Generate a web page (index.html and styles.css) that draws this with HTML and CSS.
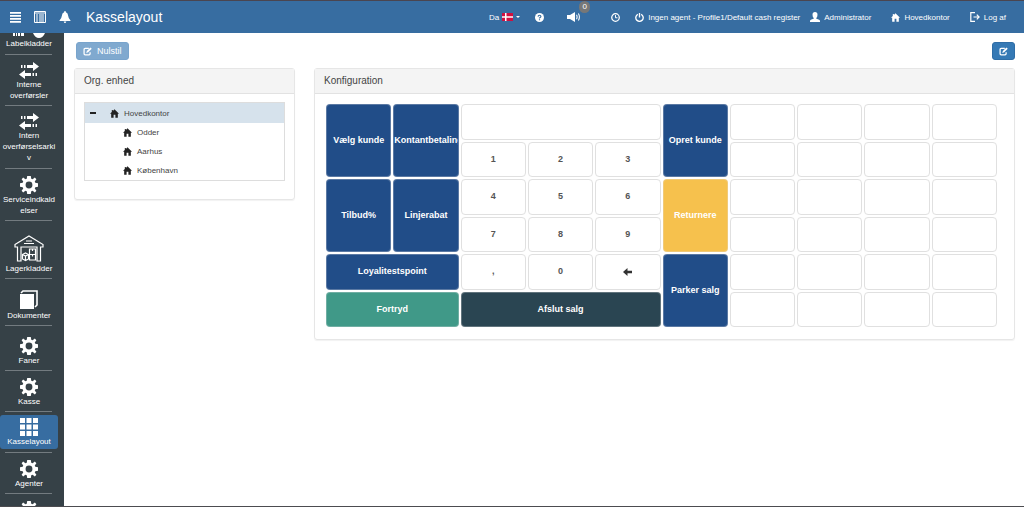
FILE: index.html
```html
<!DOCTYPE html>
<html lang="da">
<head>
<meta charset="utf-8">
<meta name="viewport" content="width=device-width, initial-scale=1">
<title>Kasselayout</title>
<link rel="stylesheet" href="styles.css">
</head>
<body>
<svg class="defs" aria-hidden="true">
  <symbol id="gear" viewBox="0 0 20 20"><path fill-rule="evenodd" d="M8 0h4l.5 3 1.500.6L16.500 1.800l1.700 1.700L16.400 6l.6 1.500 3 .5v4l-3 .5-.6 1.500 1.800 2.500-1.700 1.700L14 16.400l-1.500.6-.5 3H8l-.5-3-1.500-.6-2.500 1.800-1.700-1.700L3.600 14 3 12.500 0 12V8l3-.5L3.600 6 1.800 3.500l1.700-1.700L6 3.600 7.500 3zM10 6.200a3.800 3.800 0 1 0 0 7.600 3.800 3.800 0 0 0 0-7.600z"/></symbol>
  <symbol id="arrows" viewBox="0 0 20 17"><path d="M2 3h1.500v3H2zM5 3h1.500v3H5zM8 3h6V0l6 4.500L14 9V6H8zM18 11h-1.500v3H18zM15 11h-1.500v3H15zM12 11H6V8l-6 4.500L6 17v-3h6z"/></symbol>
  <symbol id="home" viewBox="0 0 10 10"><path d="M5 .3 10 5.400H8.700V9.700H6V6.500H4v3.200H1.300V5.400H0L2 3.300V1h1.200v1.100z"/></symbol>
  <symbol id="edit" viewBox="0 0 10 10"><path d="M6.500 1.600H2.400Q1.200 1.600 1.200 2.800v4.700Q1.200 8.700 2.400 8.700h4.300Q7.900 8.700 7.900 7.500V5.700" fill="none" stroke="currentColor" stroke-width="1.400"/><path d="M8.200.5 9.700 2 5.800 5.900l-2.200.7.700-2.200z"/></symbol>
</svg>

<header class="topbar">
  <button class="icon-btn" type="button" aria-label="Menu"><svg class="i12" viewBox="0 0 12 12"><path d="M1 1h11v1.800H1zM1 4h11v1.800H1zM1 7h11v1.800H1zM1 10h11v1.800H1z"/></svg></button>
  <button class="icon-btn" type="button" aria-label="Liste"><svg class="i12" viewBox="0 0 12 12"><path fill="none" stroke="currentColor" d="M.5.500h11v11H.5zM.5 2h11"/><path d="M2 3.500h2v1H2zM5 3.500h5v1H5zM2 5.500h2v1H2zM5 5.500h5v1H5zM2 7.500h2v1H2zM5 7.500h5v1H5zM2 9.500h2v1H2zM5 9.500h5v1H5z"/></svg></button>
  <button class="icon-btn" type="button" aria-label="Beskeder"><svg class="i12" viewBox="0 0 12 12"><path d="M6 0q.9 0 .9 1.200Q9 2 9.200 5q.2 2.500 2.300 4.500v.5H.5v-.5Q2.600 7.500 2.800 5 3 2 5.100 1.200 5.100 0 6 0zM4.700 10.500h2.600Q7 12 6 12t-1.300-1.500z"/></svg></button>
  <h1 class="title">Kasselayout</h1>
  <nav class="topnav" aria-label="Topmenu">
    <button class="top-item" type="button">Da
      <svg class="flag" viewBox="0 0 11 8"><path fill="#d01040" d="M0 0h11v8H0z"/><path fill="#fff" d="M3 0h1.500v8H3zM0 3.300h11v1.400H0z"/></svg>
      <svg class="caret" viewBox="0 0 4 2"><path d="M0 0h4L2 2z"/></svg></button>
    <a class="top-item gap-s" href="#" aria-label="Hjælp"><svg class="i9" viewBox="0 0 10 10"><circle cx="5" cy="5" r="5"/><path d="M3.400 4Q3.500 2.500 5 2.500T6.600 3.900Q6.500 4.700 5 5.500v.7M5 6.900v1.200" fill="none" stroke="#376da1" stroke-width="1.300"/></svg></a>
    <a class="top-item gap-l sound" href="#" aria-label="Lyd"><svg class="speaker" viewBox="0 0 13 10"><path d="M0 3h3l5-3v10L3 7H0z"/><path d="M9.500 2.800q1.200 2.200 0 4.400M11.400 1.500q2 3.500 0 7" fill="none" stroke="currentColor" stroke-width="1.100"/></svg><span class="badge">0</span></a>
    <a class="top-item gap-xl" href="#" aria-label="Ur"><svg class="i9" viewBox="0 0 10 10"><circle cx="5" cy="5" r="4.200" fill="none" stroke="currentColor" stroke-width="1.400"/><path d="M5 2.300v3h2.200" fill="none" stroke="currentColor" stroke-width="1.100"/></svg></a>
    <a class="top-item gap-s" href="#"><svg class="i9" viewBox="0 0 10 10"><path d="M3.200 1.500A4.100 4.100 0 1 0 6.800 1.500M5 0v5" fill="none" stroke="currentColor" stroke-width="1.500"/></svg>Ingen agent - Profile1/Default cash register</a>
    <a class="top-item gap-xs" href="#"><svg class="i10" viewBox="0 0 10 10"><path d="M5 0q2.500 0 2.500 2.800Q7.500 5 6.300 6v.8Q10 7.700 10 9v1H0V9q0-1.300 3.700-2.200V6Q2.500 5 2.500 2.800 2.500 0 5 0z"/></svg>Administrator</a>
    <a class="top-item gap-m" href="#"><svg class="i9"><use href="#home"/></svg>Hovedkontor</a>
    <a class="top-item gap-m" href="#"><svg class="i10" viewBox="0 0 10 10"><path d="M5 .7H.8v8.600H5M3.500 5H9M6.800 2.700 9.100 5 6.800 7.300" fill="none" stroke="currentColor" stroke-width="1.200"/></svg>Log af</a>
  </nav>
</header>

<div class="shell">
  <nav class="sidebar" aria-label="Sidemenu">
    <ul class="side-list">
      <li class="side-row first"><a class="side-link" href="#"><svg class="stub" viewBox="0 0 32 5"><path d="M0 0h2v3H0zM3 0h1v3H3zM5 0h2v3H5zM8 0h3v3H8zM20 0h12q-2 5-6 5t-6-5z"/></svg>Labelkladder</a></li>
      <li class="side-row"><a class="side-link" href="#"><svg class="s17"><use href="#arrows"/></svg>Interne overførsler</a></li>
      <li class="side-row"><a class="side-link long" href="#"><svg class="s17"><use href="#arrows"/></svg>Intern overførselsarkiv</a></li>
      <li class="side-row"><a class="side-link" href="#"><svg class="s18"><use href="#gear"/></svg>Serviceindkaldelser</a></li>
      <li class="side-row tall"><a class="side-link" href="#"><svg class="s28" viewBox="0 0 30 28"><g fill="none" stroke="currentColor" stroke-width="1.200"><path d="M1 9.500 15 1l14 8.500v2.500h-2.500v14H23V12H7v14H3.500V12H1zM7 12h16M10 8.500h10M12 6h6"/><path d="M15.500 14h6v5.500h-6zM15.500 19.500h6V25h-6zM8.500 19.500l3-1.500 3 1.500V24l-3 1.500-3-1.500zM8.500 19.500l3 1.500 3-1.500M11.500 21v4M18.500 14v2M18.500 19.500v2"/></g></svg>Lagerkladder</a></li>
      <li class="side-row roomy"><a class="side-link" href="#"><svg class="s20" viewBox="0 0 20 20"><path d="M1 4h14v15H1z"/><path d="M2 3 4 1h14v14l-2 2" fill="none" stroke="currentColor" stroke-width="1.600"/></svg>Dokumenter</a></li>
      <li class="side-row roomy"><a class="side-link" href="#"><svg class="s18"><use href="#gear"/></svg>Faner</a></li>
      <li class="side-row"><a class="side-link" href="#"><svg class="s18"><use href="#gear"/></svg>Kasse</a></li>
      <li class="side-row current"><a class="side-link" href="#" aria-current="page"><svg class="s18" viewBox="0 0 18 18"><path d="M0 0h5v5H0zM6.500 0h5v5h-5zM13 0h5v5h-5zM0 6.500h5v5H0zM6.500 6.500h5v5h-5zM13 6.500h5v5h-5zM0 13h5v5H0zM6.500 13h5v5h-5zM13 13h5v5h-5z"/></svg>Kasselayout</a></li>
      <li class="side-row"><a class="side-link" href="#"><svg class="s18"><use href="#gear"/></svg>Agenter</a></li>
      <li class="side-row"><a class="side-link" href="#" aria-label="Indstillinger"><svg class="s18"><use href="#gear"/></svg></a></li>
    </ul>
  </nav>

  <main class="main">
    <div class="toolbar">
      <button class="btn muted" type="button"><svg class="i9"><use href="#edit"/></svg>Nulstil</button>
      <button class="btn" type="button" aria-label="Rediger"><svg class="i9"><use href="#edit"/></svg></button>
    </div>
    <div class="columns">
      <section class="panel">
        <h2 class="panel-head">Org. enhed</h2>
        <div class="org-body">
          <ul class="tree">
            <li class="node selected"><svg class="minus" viewBox="0 0 6 2"><path d="M0 0h6v2H0z"/></svg><svg class="i9"><use href="#home"/></svg>Hovedkontor</li>
            <li class="node child"><svg class="i9"><use href="#home"/></svg>Odder</li>
            <li class="node child"><svg class="i9"><use href="#home"/></svg>Aarhus</li>
            <li class="node child"><svg class="i9"><use href="#home"/></svg>København</li>
          </ul>
        </div>
      </section>
      <section class="panel">
        <h2 class="panel-head">Konfiguration</h2>
        <div class="keys">
          <button class="key blue r2" type="button">Vælg kunde</button>
          <button class="key blue r2" type="button">Kontantbetaling</button>
          <button class="key c3" type="button" aria-label="Display"></button>
          <button class="key blue r2" type="button">Opret kunde</button>
          <button class="key" type="button"></button><button class="key" type="button"></button><button class="key" type="button"></button><button class="key" type="button"></button>
          <button class="key" type="button">1</button><button class="key" type="button">2</button><button class="key" type="button">3</button>
          <button class="key" type="button"></button><button class="key" type="button"></button><button class="key" type="button"></button><button class="key" type="button"></button>
          <button class="key blue r2" type="button">Tilbud%</button>
          <button class="key blue r2" type="button">Linjerabat</button>
          <button class="key" type="button">4</button><button class="key" type="button">5</button><button class="key" type="button">6</button>
          <button class="key yellow r2" type="button">Returnere</button>
          <button class="key" type="button"></button><button class="key" type="button"></button><button class="key" type="button"></button><button class="key" type="button"></button>
          <button class="key" type="button">7</button><button class="key" type="button">8</button><button class="key" type="button">9</button>
          <button class="key" type="button"></button><button class="key" type="button"></button><button class="key" type="button"></button><button class="key" type="button"></button>
          <button class="key blue c2" type="button">Loyalitestspoint</button>
          <button class="key" type="button">,</button><button class="key" type="button">0</button>
          <button class="key" type="button" aria-label="Slet"><svg class="back" viewBox="0 0 9 8"><path d="M4.500 0v2.700H9v2.600H4.500V8L0 4z"/></svg></button>
          <button class="key blue r2" type="button">Parker salg</button>
          <button class="key" type="button"></button><button class="key" type="button"></button><button class="key" type="button"></button><button class="key" type="button"></button>
          <button class="key green c2" type="button">Fortryd</button>
          <button class="key slate c3" type="button">Afslut salg</button>
          <button class="key" type="button"></button><button class="key" type="button"></button><button class="key" type="button"></button><button class="key" type="button"></button>
        </div>
      </section>
    </div>
  </main>
</div>
</body>
</html>
```
FILE: styles.css
```css
* { box-sizing: border-box; }
body {
  margin: 0;
  height: 100vh;
  display: flex;
  flex-direction: column;
  overflow: hidden;
  border-top: 1px solid #4a4550;
  border-bottom: 1px solid #4c4c50;
  background: #fff;
  color: #444;
  font: 8px/11px "Liberation Sans", Arial, sans-serif;
}
svg { display: block; flex: none; fill: currentColor; }
button { font: inherit; color: inherit; cursor: pointer; }
a { color: inherit; text-decoration: none; }
ul { list-style: none; margin: 0; padding: 0; }
.defs { position: absolute; width: 0; height: 0; }

.i9 { width: 9px; height: 9px; }
.i10 { width: 10px; height: 10px; }
.i12 { width: 12px; height: 12px; }

.topbar {
  flex: none;
  display: flex;
  align-items: center;
  height: 32px;
  padding: 0 18px 0 9px;
  background: #376da1;
  color: #fff;
}
.icon-btn { margin-right: 13px; padding: 0; border: 0; background: none; }
.title { margin: 0 0 0 2px; font-size: 14px; line-height: 20px; font-weight: 400; }
.topnav { display: flex; align-items: center; margin-left: auto; }
.top-item {
  display: flex;
  align-items: center;
  gap: 4px;
  padding: 0;
  border: 0;
  background: none;
  white-space: nowrap;
}
button.top-item { gap: 3px; }
.gap-xs { margin-left: 10px; }
.gap-s { margin-left: 15px; }
.gap-m { margin-left: 20px; }
.gap-l { margin-left: 23px; }
.gap-xl { margin-left: 31px; }
.flag { width: 11px; height: 8px; }
.caret { width: 4px; height: 2px; }
.speaker { width: 13px; height: 10px; }
.sound { position: relative; }
.badge {
  position: absolute;
  left: 12px;
  top: -11px;
  width: 11px;
  height: 12px;
  border-radius: 6px;
  background: #777;
  line-height: 12px;
  text-align: center;
}

.shell { flex: 1; min-height: 0; display: flex; }
.sidebar { flex: none; width: 64px; overflow: hidden; background: #364147; color: #fff; }
.side-row { width: 58px; padding: 7px 0 0; }
.side-row::after {
  content: "";
  display: block;
  height: 1px;
  margin: 4px 6px 0 5px;
  background: #737b80;
}
.side-row.first { padding-top: 0; }
.side-row.first::after { margin-top: 5px; }
.side-row.tall { padding-top: 14px; }
.side-row.roomy { padding-top: 11px; }
.side-row.current { padding-top: 3px; }
.side-row.current::after { margin-top: 3px; }
.side-link {
  display: flex;
  flex-direction: column;
  align-items: center;
  padding: 0 2px;
  text-align: center;
  overflow-wrap: anywhere;
}
.side-link.long { padding-bottom: 1px; }
.current .side-link { padding: 3px 2px 2px; border-radius: 3px; background: #376da1; }
.stub { width: 32px; height: 5px; }
.s17 { width: 20px; height: 17px; }
.s18 { width: 18px; height: 18px; }
.s20 { width: 20px; height: 20px; }
.s28 { width: 30px; height: 28px; }

.main { flex: 1; min-width: 0; padding: 9px 9px 0 10px; }
.toolbar { display: flex; justify-content: space-between; padding-left: 2px; margin-bottom: 8px; }
.btn {
  display: flex;
  align-items: center;
  gap: 5px;
  height: 18px;
  padding: 0 6px;
  border: 1px solid #2f6da6;
  border-radius: 3px;
  background: #3579b5;
  color: #fff;
  font-size: 9px;
}
.muted { border-color: #79a4cc; background: #80a9cf; }
.columns { display: grid; grid-template-columns: 221fr 701fr; gap: 19px; align-items: start; }
.panel { min-width: 0; border: 1px solid #e6e6e6; border-radius: 3px; box-shadow: 0 1px 1px #f2f2f2; }
.panel-head {
  margin: 0;
  padding: 5px 9px;
  border-bottom: 1px solid #e2e2e2;
  background: #f4f4f4;
  font-size: 10px;
  line-height: 14px;
  font-weight: 400;
}
.org-body { padding: 8px 9px 18px; }
.tree { border: 1px solid #ddd; }
.node { display: flex; align-items: center; gap: 5px; height: 19px; padding-left: 5px; }
.node .i9 { color: #222; }
.selected { height: 20px; background: #d6e2ec; }
.child { padding-left: 38px; }
.minus { width: 6px; height: 2px; margin-right: 9px; color: #222; }

.keys {
  display: grid;
  grid-template-columns: repeat(10, minmax(0, 1fr));
  grid-template-rows: repeat(6, 1fr);
  min-height: 245px;
  gap: 2px;
  padding: 10px 17px 12px 11px;
}
.key {
  display: flex;
  align-items: center;
  justify-content: safe center;
  min-width: 0;
  padding: 0;
  overflow: hidden;
  border: 1px solid #e0e0e0;
  border-radius: 4px;
  background: #fff;
  color: #555;
  font-size: 9px;
  font-weight: 700;
  white-space: nowrap;
}
.r2 { grid-row: span 2; }
.c2 { grid-column: span 2; }
.c3 { grid-column: span 3; }
.blue, .yellow, .green, .slate { border-color: rgba(224, 224, 224, .3); color: #fff; }
.blue { background-color: #214d88; }
.yellow { background-color: #f6c14d; }
.green { background-color: #409988; }
.slate { background-color: #2a4552; }
.back { width: 9px; height: 8px; color: #333; }
```
